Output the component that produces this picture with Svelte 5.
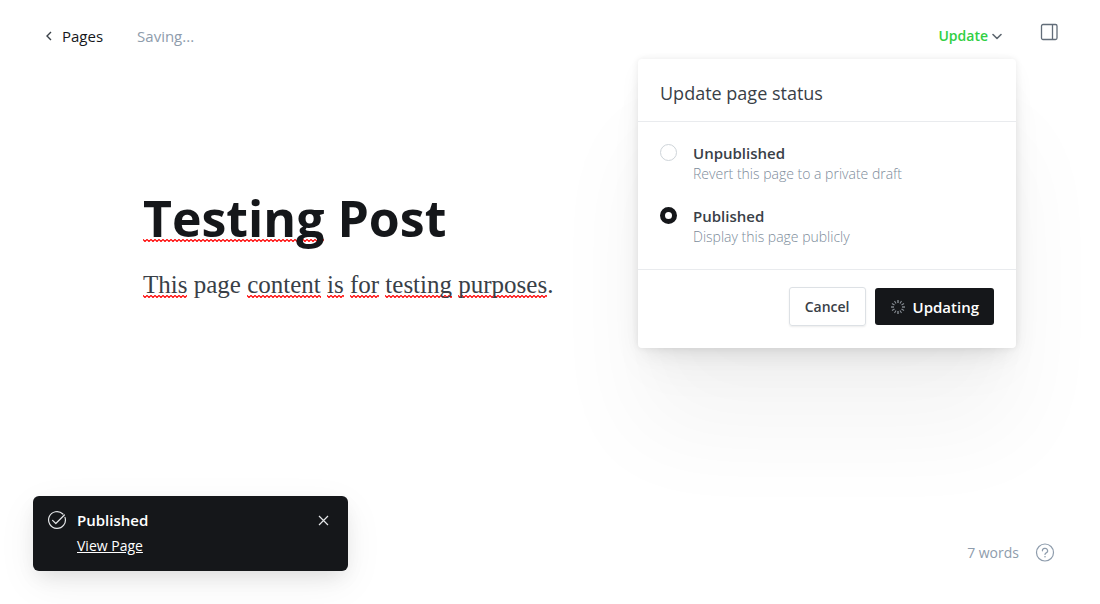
<script>
  let status = $state('published');

  const options = [
    { value: 'unpublished', label: 'Unpublished', hint: 'Revert this page to a private draft' },
    { value: 'published', label: 'Published', hint: 'Display this page publicly' }
  ];

  const title = [
    { text: 'Testing', flagged: true },
    { text: 'Post', flagged: false }
  ];

  const body = [
    { text: 'This', flagged: true },
    { text: 'page', flagged: false },
    { text: 'content', flagged: true },
    { text: 'is', flagged: true },
    { text: 'for', flagged: true },
    { text: 'testing', flagged: true },
    { text: 'purposes', flagged: true }
  ];

  const spokes = Array.from({ length: 12 }, (_, i) => i * 30);
</script>

<div class="page">
  <header>
    <nav>
      <a class="back" href="#pages">
        <svg width="8" height="10" viewBox="0 0 8 10" aria-hidden="true">
          <path d="M6 1 2 5l4 4" fill="none" stroke="#394047" stroke-width="1.4" />
        </svg>
        Pages
      </a>
      <span class="saving">Saving...</span>
    </nav>
    <div class="actions">
      <div class="publish">
        <button class="update" type="button" aria-expanded="true">
          Update
          <svg width="10" height="8" viewBox="0 0 10 8" aria-hidden="true">
            <path d="M1 2.5l4 4 4-4" fill="none" stroke="#5d666f" stroke-width="1.6" stroke-linecap="round" stroke-linejoin="round" />
          </svg>
        </button>

        <form class="menu">
          <h2>Update page status</h2>
          <div class="options">
            {#each options as option}
              <div class="option">
                <input type="radio" id={option.value} name="status" value={option.value} bind:group={status} />
                <label for={option.value}>
                  <strong>{option.label}</strong>
                  <span>{option.hint}</span>
                </label>
              </div>
            {/each}
          </div>
          <div class="buttons">
            <button class="cancel" type="button">Cancel</button>
            <button class="updating" type="button">
              <svg width="16" height="16" viewBox="0 0 16 16" aria-hidden="true">
                {#each spokes as angle}
                  <path d="M8 1v3" stroke={angle % 90 ? '#858b92' : '#a4abb2'} stroke-width="1.1" transform="rotate({angle} 8 8)" />
                {/each}
              </svg>
              Updating
            </button>
          </div>
        </form>
      </div>
      <button class="icon" type="button" aria-label="Settings">
        <svg width="18" height="18" viewBox="0 0 18 18" aria-hidden="true">
          <rect x="1.5" y="1.5" width="15.5" height="15" rx="1.5" fill="none" stroke="#626d79" stroke-width="1.3" />
          <path d="M12.5 1.5v15" stroke="#626d79" stroke-width="1.3" />
        </svg>
      </button>
    </div>
  </header>

  <main>
    <h1>{#each title as word, i}{i ? ' ' : ''}<span class:flagged={word.flagged}>{word.text}</span>{/each}</h1>
    <p>{#each body as word, i}{i ? ' ' : ''}<span class:flagged={word.flagged}>{word.text}</span>{/each}.</p>
  </main>

  <footer>
    <div class="toast" role="status">
      <svg width="20" height="20" viewBox="0 0 20 20" aria-hidden="true">
        <g fill="none" stroke="#e4e6e8" stroke-width="1.2" stroke-linecap="round" stroke-linejoin="round">
          <path d="M15.9 4A8.4 8.4 0 1 0 18 7.4" />
          <path d="M5.6 10.4l3.2 3.1L17.4 5" />
        </g>
      </svg>
      <div class="message">
        <strong>Published</strong>
        <a href="#view">View Page</a>
      </div>
      <button class="icon" type="button" aria-label="Close">
        <svg width="11" height="11" viewBox="0 0 11 11" aria-hidden="true">
          <path d="M1 1l9 9M10 1l-9 9" stroke="#e4e6e8" stroke-width="1.2" />
        </svg>
      </button>
    </div>
    <div class="count">
      <span>7 words</span>
      <button class="icon" type="button" aria-label="Help">
        <svg width="20" height="20" viewBox="0 0 20 20" aria-hidden="true">
          <g fill="none" stroke="#8e9cac" stroke-width="1.2" stroke-linecap="round">
            <circle cx="10" cy="9.5" r="8.5" />
            <path d="M7.4 7.8a2.6 2.4 0 1 1 3.8 2.1c-.8.4-1.2.8-1.2 1.6" />
          </g>
          <circle cx="10" cy="13.7" r="0.8" fill="#8e9cac" />
        </svg>
      </button>
    </div>
  </footer>
</div>

<style>
  :global(body) {
    margin: 0;
    background: #fff;
  }

  .page {
    box-sizing: border-box;
    min-height: 100vh;
    display: flex;
    flex-direction: column;
    font-family: "Open Sans", "Noto Sans", sans-serif;
    font-size: 15px;
    line-height: 20px;
    color: #394047;
  }

  button {
    font: inherit;
    color: inherit;
    margin: 0;
    padding: 0;
    border: 0;
    background: none;
    cursor: pointer;
  }

  svg {
    display: block;
    flex: none;
  }

  header {
    display: flex;
    justify-content: space-between;
    padding: 22px 42px 0 45px;
  }

  nav,
  .actions {
    display: flex;
    align-items: center;
  }

  nav {
    gap: 34px;
    height: 27px;
  }

  .back {
    display: flex;
    align-items: center;
    gap: 9px;
    color: #15171a;
    text-decoration: none;
  }

  .saving {
    color: #8e9cac;
  }

  .actions {
    gap: 38px;
    align-items: flex-start;
  }

  .publish {
    position: relative;
  }

  .update {
    display: flex;
    align-items: center;
    gap: 4px;
    height: 28px;
    color: #30cf43;
    font-size: 14px;
    font-weight: 600;
  }

  .actions > .icon {
    padding-top: 1px;
  }

  .menu {
    position: absolute;
    z-index: 1;
    top: 37px;
    right: -14px;
    width: 378px;
    background: #fff;
    border-radius: 4px;
    box-shadow:
      0 0 7px rgba(0, 0, 0, 0.08),
      0 8px 22px -6px rgba(0, 0, 0, 0.1),
      0 28px 44px -12px rgba(0, 0, 0, 0.05),
      0 84px 100px rgba(0, 0, 0, 0.045);
  }

  h2 {
    margin: 0;
    padding: 22px 22px 15px;
    border-bottom: 1px solid #e9ebee;
    font-size: 18px;
    line-height: 25px;
    font-weight: 400;
  }

  .options {
    display: flex;
    flex-direction: column;
    gap: 21px;
    padding: 21px 22px;
    border-bottom: 1px solid #e9ebee;
  }

  .option {
    display: flex;
    align-items: flex-start;
    gap: 16px;
  }

  input {
    appearance: none;
    box-sizing: border-box;
    flex: none;
    width: 17px;
    height: 17px;
    margin: 1px 0 0;
    border: 1px solid #ced4d9;
    border-radius: 50%;
    background: #fff;
  }

  input:checked {
    border: 5px solid #15171a;
  }

  label strong,
  label span {
    display: block;
  }

  label strong {
    line-height: 20px;
    font-weight: 600;
  }

  label span {
    font-size: 14px;
    line-height: 22px;
    font-weight: 300;
    color: #7c8b9a;
  }

  .buttons {
    display: flex;
    justify-content: flex-end;
    align-items: center;
    gap: 9px;
    padding: 17px 22px 22px;
  }

  .cancel,
  .updating {
    display: flex;
    align-items: center;
    border-radius: 3px;
    padding: 0 15px;
    font-weight: 600;
  }

  .cancel {
    height: 39px;
    border: 1px solid #dde1e5;
    box-shadow: 0 1px 2px rgba(0, 0, 0, 0.08);
    font-size: 14px;
  }

  .updating {
    gap: 7px;
    height: 37px;
    background: #15171a;
    color: #fff;
  }

  main {
    flex: 1;
    padding: 133px 143px 0;
  }

  h1 {
    margin: 0;
    color: #15171a;
    font-size: 50px;
    line-height: 70px;
    font-weight: 700;
  }

  p {
    margin: 15px 0 0;
    font-family: Georgia, "Liberation Serif", serif;
    font-size: 25px;
    line-height: 34px;
  }

  .flagged {
    background: url("data:image/svg+xml,%3Csvg xmlns='http://www.w3.org/2000/svg' width='4' height='3'%3E%3Cpath d='M-1 1.5 0 .5 2 2.5 4 .5 5 1.5' fill='none' stroke='%23f00' stroke-width='1.2'/%3E%3C/svg%3E") repeat-x left bottom;
  }

  h1 .flagged {
    background-position: left bottom 10px;
  }

  footer {
    display: flex;
    justify-content: space-between;
    align-items: flex-end;
    padding: 0 45px 33px 33px;
  }

  .toast {
    box-sizing: border-box;
    display: flex;
    align-items: flex-start;
    gap: 10px;
    width: 315px;
    padding: 14px 19px 15px 14px;
    border-radius: 6px;
    background: #15171a;
    color: #fff;
    box-shadow:
      0 8px 20px -4px rgba(0, 0, 0, 0.1),
      0 12px 40px rgba(0, 0, 0, 0.06);
  }

  .message {
    flex: 1;
    display: flex;
    flex-direction: column;
    align-items: flex-start;
    gap: 4px;
  }

  .message strong {
    font-weight: 600;
    line-height: 21px;
  }

  .message a {
    color: inherit;
    font-size: 14px;
    line-height: 21px;
  }

  .toast .icon {
    padding-top: 5px;
  }

  .count {
    display: flex;
    align-items: center;
    gap: 16px;
    padding-bottom: 8px;
    color: #8e9cac;
    font-size: 14px;
  }
</style>
